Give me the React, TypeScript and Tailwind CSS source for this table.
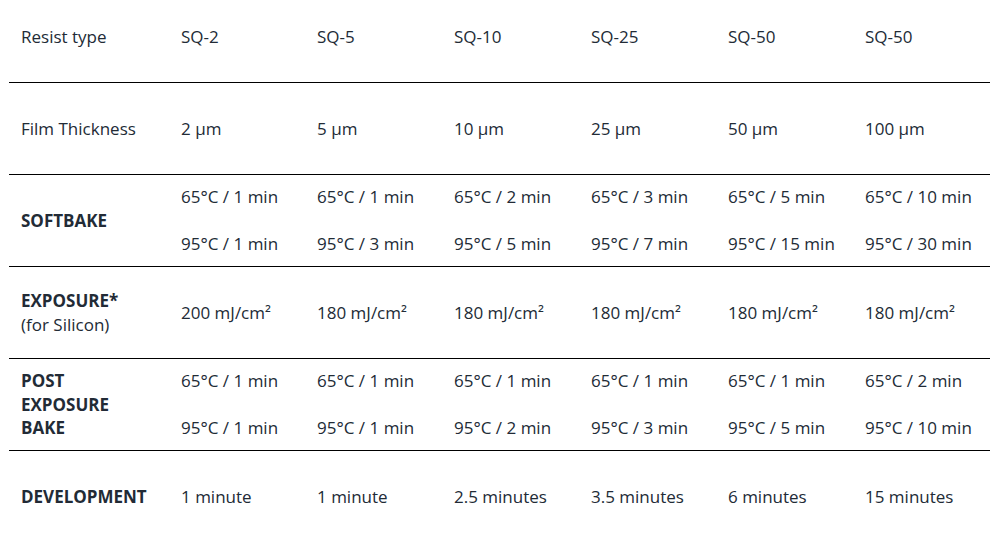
import React from "react";

type Row = { label: React.ReactNode; values: React.ReactNode[]; header?: boolean };

const two = (a: string, b: string) => (
  <>
    {a}
    <br />
    <br />
    {b}
  </>
);

const rows: Row[] = [
  { label: "Resist type", values: ["SQ-2", "SQ-5", "SQ-10", "SQ-25", "SQ-50", "SQ-50"], header: true },
  { label: "Film Thickness", values: ["2 µm", "5 µm", "10 µm", "25 µm", "50 µm", "100 µm"] },
  {
    label: <strong className="font-bold">SOFTBAKE</strong>,
    values: [
      two("65°C / 1 min", "95°C / 1 min"),
      two("65°C / 1 min", "95°C / 3 min"),
      two("65°C / 2 min", "95°C / 5 min"),
      two("65°C / 3 min", "95°C / 7 min"),
      two("65°C / 5 min", "95°C / 15 min"),
      two("65°C / 10 min", "95°C / 30 min"),
    ],
  },
  {
    label: (
      <>
        <strong className="font-bold">EXPOSURE*</strong>
        <br />
        (for Silicon)
      </>
    ),
    values: ["200 mJ/cm²", "180 mJ/cm²", "180 mJ/cm²", "180 mJ/cm²", "180 mJ/cm²", "180 mJ/cm²"],
  },
  {
    label: (
      <strong className="font-bold">
        POST
        <br />
        EXPOSURE
        <br />
        BAKE
      </strong>
    ),
    values: [
      two("65°C / 1 min", "95°C / 1 min"),
      two("65°C / 1 min", "95°C / 1 min"),
      two("65°C / 1 min", "95°C / 2 min"),
      two("65°C / 1 min", "95°C / 3 min"),
      two("65°C / 1 min", "95°C / 5 min"),
      two("65°C / 2 min", "95°C / 10 min"),
    ],
  },
  {
    label: <strong className="font-bold">DEVELOPMENT</strong>,
    values: ["1 minute", "1 minute", "2.5 minutes", "3.5 minutes", "6 minutes", "15 minutes"],
  },
];

export default function App() {
  return (
    <div
      className="w-[1003px] h-[536px] overflow-hidden bg-white text-[#222b36] text-[17px] leading-[23.5px]"
      style={{ fontFamily: '"Open Sans", "Liberation Sans", sans-serif' }}
    >
      <div className="ml-[9px] w-[981px] -mt-[9px]">
        {rows.map((r, i) => (
          <div
            key={i}
            className={`grid grid-cols-[160px_136px_137px_137px_137px_137px_137px] items-center h-[92px] ${
              i < rows.length - 1 ? "border-b border-black" : ""
            }`}
          >
            <div className="px-3">{r.label}</div>
            {r.values.map((v, j) => (
              <div key={j} className="px-3 whitespace-nowrap">
                {v}
              </div>
            ))}
          </div>
        ))}
      </div>
    </div>
  );
}
